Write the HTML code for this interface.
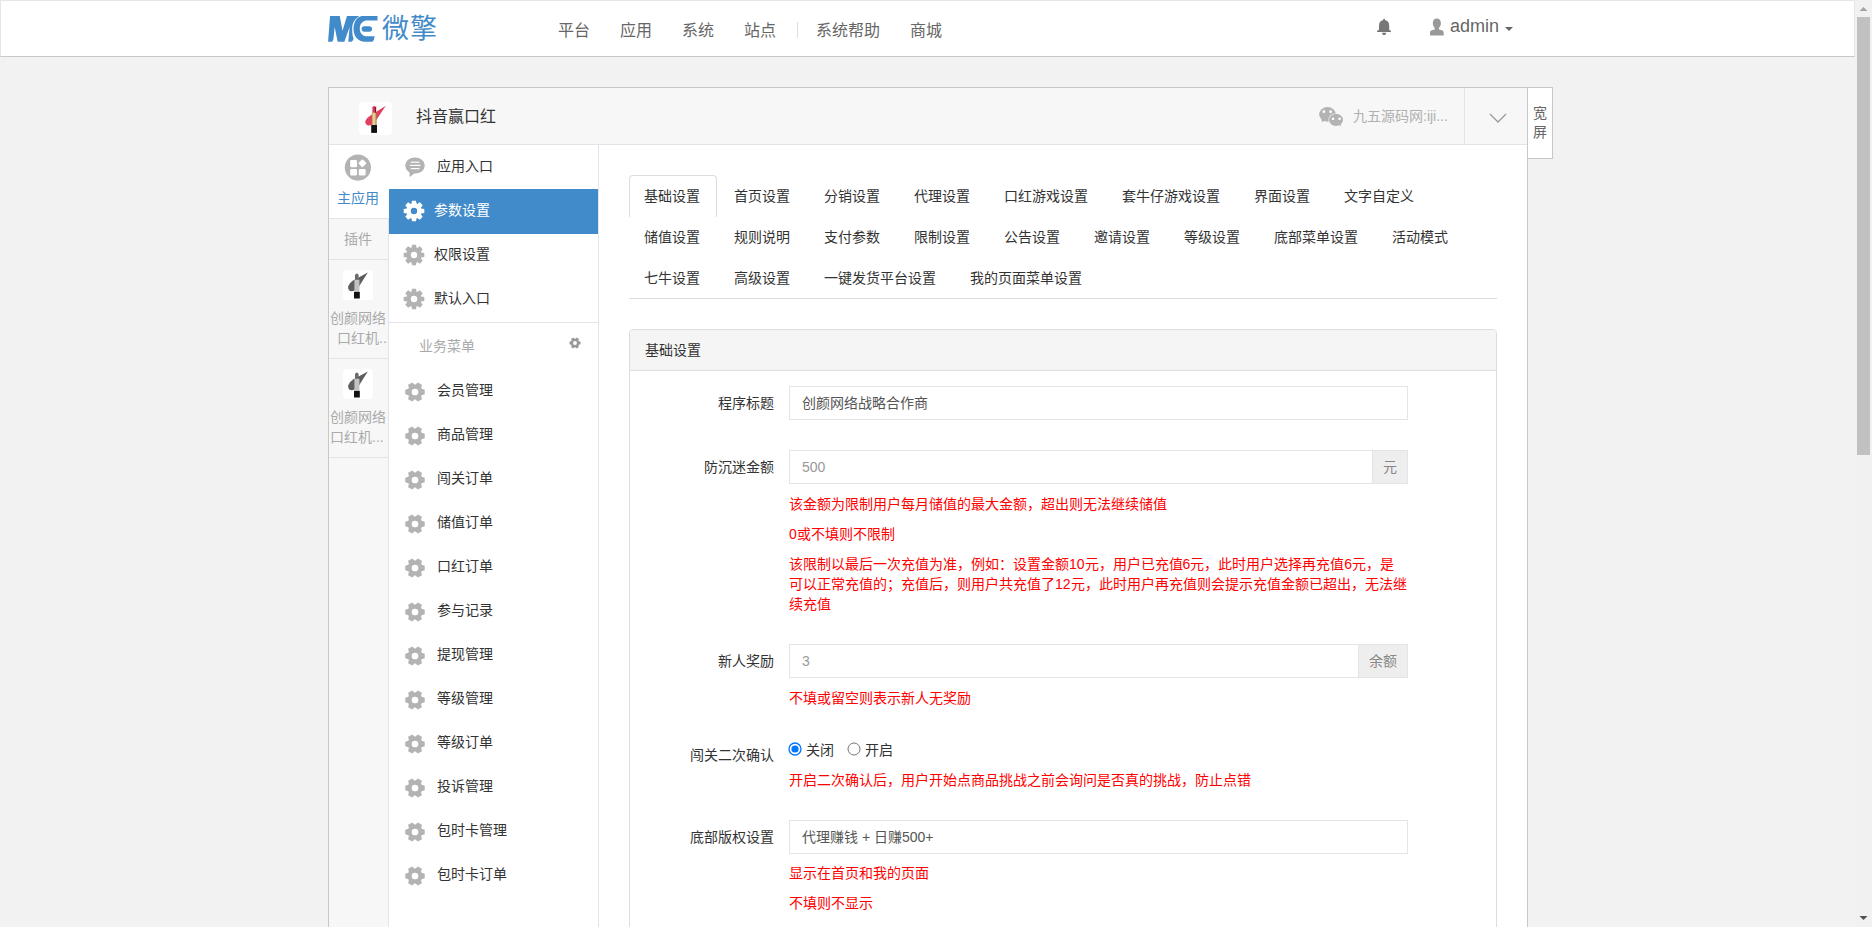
<!DOCTYPE html>
<html lang="zh-CN"><head><meta charset="utf-8"><style>
html,body{margin:0;padding:0;overflow:hidden;width:1872px;height:927px;}
body{background:#f2f2f2;font-family:"Liberation Sans",sans-serif;font-size:14px;color:#333;position:relative;}
.abs{position:absolute;}
#hdr{position:absolute;left:0;top:0;width:1853px;height:55px;background:#fff;border:1px solid #e6e6e6;border-bottom-color:#c8c8c8;}
.nav{position:absolute;top:20px;font-size:16px;color:#666;line-height:20px;white-space:nowrap;}
#sb{position:absolute;left:1855px;top:0;width:17px;height:927px;background:#f1f1f1;}
#panel{position:absolute;left:328px;top:87px;width:1198px;height:900px;border:1px solid #c8c8c8;background:#fff;}
#ph{position:absolute;left:0;top:0;width:1198px;height:56px;background:#f7f7f7;border-bottom:1px solid #e3e3e9;}
#kp{position:absolute;left:1528px;top:87px;width:24px;height:54px;padding-top:16px;border:1px solid #c8c8c8;border-left:none;background:#fff;color:#666;font-size:14px;line-height:19px;text-align:center;}
#lcol{position:absolute;left:0;top:57px;width:59px;height:900px;background:#f7f7f7;border-right:1px solid #e3e3e9;}
#mcol{position:absolute;left:60px;top:57px;width:209px;height:900px;background:#fff;border-right:1px solid #e3e3e9;}
.t{position:absolute;white-space:nowrap;line-height:20px;}
.tab{position:absolute;height:20px;line-height:20px;padding:10px 15px;white-space:nowrap;color:#333;}
.lbl{position:absolute;text-align:right;white-space:nowrap;line-height:20px;color:#333;width:200px;}
.inp{position:absolute;left:789px;width:617px;height:32px;border:1px solid #e3e3e9;background:#fff;}
.inp span{position:absolute;left:12px;top:6px;line-height:20px;color:#555;white-space:nowrap;}
.addon{position:absolute;top:-1px;height:32px;border:1px solid #e3e3e9;background:#eee;color:#888;text-align:center;line-height:32px;}
.help{position:absolute;left:789px;color:#f00;line-height:20px;white-space:nowrap;}
</style></head><body>
<div id="hdr">
  <svg class="abs" style="left:326px;top:14px" width="52" height="28" viewBox="0 0 52 28">
    <path fill="#428bca" d="M1.1,26.8 L3.05,1.1 L12.75,1.1 L15.5,15.8 L20,1.1 L32.3,1.1 C28,4 25.2,8 25.2,13.5 C25.2,18 25.6,21.5 26.6,23.8 C26,25.8 25,26.8 23.9,26.8 L21.3,26.8 L22.6,11.9 L17.4,26.8 L10.65,26.8 L7.7,11.9 L6.4,24.2 C6,26 5,26.8 3.85,26.8 Z"/>
    <path fill="#428bca" d="M34.5,1.1 L50.5,1.1 L50.5,5.5 L39.5,5.5 C35,6 32.8,9.5 32.8,13.5 C32.8,18 35.5,21.3 40,21.3 L47.7,21.3 L47,24.5 C46.5,26 45.5,26.8 44,26.8 L38,26.8 C31,26.8 26.5,21 26.5,14 C26.5,7 30,2.5 34.5,1.1 Z"/>
    <rect fill="#428bca" x="34.6" y="11.3" width="10.4" height="5.5" rx="2.75"/>
  </svg>
  <div class="abs" style="left:381px;top:12px;font-size:27px;line-height:32px;color:#428bca;letter-spacing:1px">微擎</div>
  <div class="nav" style="left:557px">平台</div>
  <div class="nav" style="left:619px">应用</div>
  <div class="nav" style="left:681px">系统</div>
  <div class="nav" style="left:743px">站点</div>
  <div class="abs" style="left:796px;top:21px;width:1px;height:16px;background:#ddd"></div>
  <div class="nav" style="left:815px">系统帮助</div>
  <div class="nav" style="left:909px">商城</div>
  <svg class="abs" style="left:1374px;top:16px" width="18" height="19" viewBox="0 0 18 19">
    <path fill="#777" d="M9.1,1.8 C9.7,1.8 10,2.4 10,3 C12.6,3.6 14.2,5.5 14.2,8.5 L14.2,12 C14.2,13 15,13.6 16,13.9 L16,15.1 L2,15.1 L2,13.9 C3,13.6 4,13 4,12 L4,8.5 C4,5.5 5.6,3.6 8.2,3 C8.2,2.4 8.5,1.8 9.1,1.8 Z M7,15.8 L11.2,15.8 C11.2,17.2 10.2,18.1 9.1,18.1 C8,18.1 7,17.2 7,15.8 Z"/>
  </svg>
  <svg class="abs" style="left:1428px;top:16px" width="16" height="19" viewBox="0 0 16 19">
    <path fill="#999" d="M7.85,1.4 C10.4,1.4 11.9,3.3 11.9,6 C11.9,8.2 11,9.9 10,10.8 L10,12.6 C13,13 14.7,13.8 14.7,15.5 L14.7,18.5 L1,18.5 L1,15.5 C1,13.8 2.7,13 5.7,12.6 L5.7,10.8 C4.7,9.9 3.8,8.2 3.8,6 C3.8,3.3 5.3,1.4 7.85,1.4 Z"/>
  </svg>
  <div class="abs" style="left:1449px;top:15px;font-size:18px;line-height:20px;color:#666">admin</div>
  <svg class="abs" style="left:1503px;top:25px" width="10" height="6" viewBox="0 0 10 6"><path fill="#666" d="M1,1 L9,1 L5,5 Z"/></svg>
</div>
<div id="sb">
  <svg class="abs" style="left:4px;top:6px" width="9" height="6" viewBox="0 0 9 6"><path fill="#a3a3a3" d="M0.5,5 L4.5,1 L8.5,5 Z"/></svg>
  <div class="abs" style="left:2px;top:17px;width:13px;height:438px;background:#c1c1c1"></div>
  <svg class="abs" style="left:4px;top:915px" width="9" height="6" viewBox="0 0 9 6"><path fill="#505050" d="M0.5,1 L8.5,1 L4.5,5 Z"/></svg>
</div>
<div id="panel"><div id="ph"></div><div id="lcol"></div><div id="mcol"></div></div>
<div id="kp">宽<br>屏</div>
<div class="abs" style="left:359px;top:102px;width:33px;height:33px;background:#fff;border-radius:4px"></div>
<svg class="abs" style="left:359px;top:102px" width="33" height="33" viewBox="0 0 33 33">
<defs><linearGradient id="gold" x1="0" x2="1" y1="0" y2="0"><stop offset="0" stop-color="#b8914a"/><stop offset="0.45" stop-color="#f3e2b0"/><stop offset="1" stop-color="#a67c3a"/></linearGradient></defs>
<path fill="#e0405e" d="M6.3,19.2 Q7.6,15.6 11.5,13.5 L26.8,3.8 L15.8,20.3 Q12.8,23.6 9.6,23.4 Q5.9,22.6 6.3,19.2 Z"/>
<path fill="#d9385a" d="M13.4,10.9 L13.4,5.2 Q14.6,3.4 16,4.2 L17.1,5 L17.1,10.9 Z"/>
<rect x="15.9" y="5" width="1.2" height="6" fill="#7a1a2c"/>
<rect x="12.8" y="10.7" width="4.8" height="12.3" fill="url(#gold)"/>
<rect x="12.2" y="23" width="5.8" height="7.9" fill="#111"/></svg>
<div class="t" style="left:416px;top:107px;color:#333;font-size:16px;">抖音赢口红</div>
<svg class="abs" style="left:1318px;top:106px" width="26" height="22" viewBox="0 0 26 22">
<ellipse cx="9.5" cy="8.35" rx="8.3" ry="7.35" fill="#b3b3b3"/><path d="M3.5,13 L4,16.2 L7,14.5 Z" fill="#b3b3b3"/>
<ellipse cx="18" cy="13.85" rx="7.6" ry="6.7" fill="#f7f7f7"/>
<ellipse cx="18" cy="13.85" rx="7" ry="6.05" fill="#b3b3b3"/><path d="M21,18.5 L22.8,20.4 L23,17.5 Z" fill="#b3b3b3"/>
<circle cx="5.9" cy="5.7" r="1.4" fill="#fff"/><circle cx="12.6" cy="5.7" r="1.4" fill="#fff"/>
<circle cx="15" cy="12.8" r="1.3" fill="#fff"/><circle cx="21.6" cy="12.8" r="1.3" fill="#fff"/></svg>
<div class="t" style="left:1353px;top:106px;color:#b0b0b0;font-size:14px;">九五源码网:iji...</div>
<div class="abs" style="left:1464px;top:88px;width:1px;height:56px;background:#e3e3e9"></div>
<svg class="abs" style="left:1488px;top:111px" width="20" height="14" viewBox="0 0 20 14"><path d="M2,3 L10,11 L18,3" fill="none" stroke="#999" stroke-width="1.3"/></svg>
<div class="abs" style="left:329px;top:145px;width:60px;height:73px;background:#fff;border-bottom:1px solid #e3e3e9"></div>
<svg class="abs" style="left:344px;top:154px" width="28" height="28" viewBox="0 0 28 28">
<circle cx="13.9" cy="13.6" r="13.1" fill="#b3b3b3"/>
<rect x="6.2" y="6" width="6.8" height="7.2" rx="1.3" fill="#fff"/>
<rect x="6.2" y="15" width="6.8" height="6.6" rx="1.3" fill="#fff"/>
<rect x="14.8" y="15" width="6.8" height="6.6" rx="1.3" fill="#fff"/>
<rect x="15.2" y="6.4" width="6" height="6" rx="1" fill="#fff" transform="rotate(45 18.4 9.6)"/></svg>
<div class="t" style="left:337px;top:188px;color:#428bca;font-size:14px;">主应用</div>
<div class="abs" style="left:329px;top:259px;width:59px;height:0;border-bottom:1px solid #e3e3e9"></div>
<div class="t" style="left:344px;top:229px;color:#aaa;font-size:14px;">插件</div>
<div class="abs" style="left:329px;top:358px;width:59px;height:0;border-bottom:1px solid #e3e3e9"></div>
<div class="abs" style="left:343px;top:270px;width:30px;height:30px;background:#fff;border-radius:3px"></div>
<svg class="abs" style="left:343px;top:270px" width="30" height="30" viewBox="0 0 30 30">
<path fill="#5e5e5e" d="M5.2,16.5 Q6.5,12.5 10.5,10.3 L24.8,2.5 L16,16.5 Q12,21.5 8,21.2 Q4.8,20.5 5.2,16.5 Z"/>
<path fill="#6a6a6a" d="M12,10 L12,5 Q13.2,2.8 14.6,3.7 L15.6,5 L15.6,10 Z"/>
<rect x="11.4" y="9.8" width="5" height="12.1" fill="#c2c2c2"/>
<rect x="11" y="21.9" width="5.8" height="6.6" fill="#111"/></svg>
<div class="t" style="left:330px;top:308px;color:#aaa;font-size:14px;">创颜网络</div>
<div class="t" style="left:337px;top:328px;color:#aaa;font-size:14px;width:51px;overflow:hidden">口红机...</div>
<div class="abs" style="left:329px;top:457px;width:59px;height:0;border-bottom:1px solid #e3e3e9"></div>
<div class="abs" style="left:343px;top:369px;width:30px;height:30px;background:#fff;border-radius:3px"></div>
<svg class="abs" style="left:343px;top:369px" width="30" height="30" viewBox="0 0 30 30">
<path fill="#5e5e5e" d="M5.2,16.5 Q6.5,12.5 10.5,10.3 L24.8,2.5 L16,16.5 Q12,21.5 8,21.2 Q4.8,20.5 5.2,16.5 Z"/>
<path fill="#6a6a6a" d="M12,10 L12,5 Q13.2,2.8 14.6,3.7 L15.6,5 L15.6,10 Z"/>
<rect x="11.4" y="9.8" width="5" height="12.1" fill="#c2c2c2"/>
<rect x="11" y="21.9" width="5.8" height="6.6" fill="#111"/></svg>
<div class="t" style="left:330px;top:407px;color:#aaa;font-size:14px;">创颜网络</div>
<div class="t" style="left:330px;top:427px;color:#aaa;font-size:14px;width:58px;overflow:hidden">口红机...</div>
<svg class="abs" style="left:404px;top:156px" width="22" height="22" viewBox="0 0 22 22">
<ellipse cx="11" cy="9.5" rx="9.8" ry="8" fill="#b3b3b3"/><path d="M5.2,14.5 L5.8,21 L10.8,17 Z" fill="#b3b3b3"/>
<rect x="6.8" y="5.6" width="8.6" height="1.2" fill="#fff"/><rect x="5.8" y="8.8" width="10.6" height="1.2" fill="#fff"/><rect x="6.8" y="12" width="8.6" height="1.2" fill="#fff"/></svg>
<div class="t" style="left:437px;top:156px;color:#333;font-size:14px;">应用入口</div>
<div class="abs" style="left:389px;top:189px;width:209px;height:45px;background:#428bca"></div>
<svg class="abs" style="left:401.6px;top:199.4px" width="24" height="24" viewBox="0 0 24 24"><path fill="#fff" fill-rule="evenodd" d="M9.40,4.86 L10.00,1.69 L14.00,1.69 L14.60,4.86 L15.21,5.11 L17.87,3.30 L20.70,6.13 L18.89,8.79 L19.14,9.40 L22.31,10.00 L22.31,14.00 L19.14,14.60 L18.89,15.21 L20.70,17.87 L17.87,20.70 L15.21,18.89 L14.60,19.14 L14.00,22.31 L10.00,22.31 L9.40,19.14 L8.79,18.89 L6.13,20.70 L3.30,17.87 L5.11,15.21 L4.86,14.60 L1.69,14.00 L1.69,10.00 L4.86,9.40 L5.11,8.79 L3.30,6.13 L6.13,3.30 L8.79,5.11 Z M15.20,12.00 A3.2,3.2 0 1 0 8.80,12.00 A3.2,3.2 0 1 0 15.20,12.00 Z"/></svg>
<div class="t" style="left:434px;top:200px;color:#fff;font-size:14px;">参数设置</div>
<svg class="abs" style="left:401.6px;top:243.4px" width="24" height="24" viewBox="0 0 24 24"><path fill="#b3b3b3" fill-rule="evenodd" d="M9.40,4.86 L10.00,1.69 L14.00,1.69 L14.60,4.86 L15.21,5.11 L17.87,3.30 L20.70,6.13 L18.89,8.79 L19.14,9.40 L22.31,10.00 L22.31,14.00 L19.14,14.60 L18.89,15.21 L20.70,17.87 L17.87,20.70 L15.21,18.89 L14.60,19.14 L14.00,22.31 L10.00,22.31 L9.40,19.14 L8.79,18.89 L6.13,20.70 L3.30,17.87 L5.11,15.21 L4.86,14.60 L1.69,14.00 L1.69,10.00 L4.86,9.40 L5.11,8.79 L3.30,6.13 L6.13,3.30 L8.79,5.11 Z M15.20,12.00 A3.2,3.2 0 1 0 8.80,12.00 A3.2,3.2 0 1 0 15.20,12.00 Z"/></svg>
<div class="t" style="left:434px;top:244px;color:#333;font-size:14px;">权限设置</div>
<svg class="abs" style="left:401.6px;top:287.4px" width="24" height="24" viewBox="0 0 24 24"><path fill="#b3b3b3" fill-rule="evenodd" d="M9.40,4.86 L10.00,1.69 L14.00,1.69 L14.60,4.86 L15.21,5.11 L17.87,3.30 L20.70,6.13 L18.89,8.79 L19.14,9.40 L22.31,10.00 L22.31,14.00 L19.14,14.60 L18.89,15.21 L20.70,17.87 L17.87,20.70 L15.21,18.89 L14.60,19.14 L14.00,22.31 L10.00,22.31 L9.40,19.14 L8.79,18.89 L6.13,20.70 L3.30,17.87 L5.11,15.21 L4.86,14.60 L1.69,14.00 L1.69,10.00 L4.86,9.40 L5.11,8.79 L3.30,6.13 L6.13,3.30 L8.79,5.11 Z M15.20,12.00 A3.2,3.2 0 1 0 8.80,12.00 A3.2,3.2 0 1 0 15.20,12.00 Z"/></svg>
<div class="t" style="left:434px;top:288px;color:#333;font-size:14px;">默认入口</div>
<div class="abs" style="left:389px;top:322px;width:209px;height:1px;background:#e3e3e9"></div>
<div class="t" style="left:419px;top:336px;color:#aaa;font-size:14px;">业务菜单</div>
<svg class="abs" style="left:563.2px;top:330.9px" width="24" height="24" viewBox="0 0 24 24"><path fill="#999" fill-rule="evenodd" d="M15.81,10.14 L17.53,10.67 L17.53,13.33 L15.81,13.86 L15.51,14.37 L15.92,16.12 L13.61,17.45 L12.30,16.22 L11.70,16.22 L10.39,17.45 L8.08,16.12 L8.49,14.37 L8.19,13.86 L6.47,13.33 L6.47,10.67 L8.19,10.14 L8.49,9.63 L8.08,7.88 L10.39,6.55 L11.70,7.78 L12.30,7.78 L13.61,6.55 L15.92,7.88 L15.51,9.63 Z M13.91,12.00 A1.9139999999999997,1.9139999999999997 0 1 0 10.09,12.00 A1.9139999999999997,1.9139999999999997 0 1 0 13.91,12.00 Z"/></svg>
<svg class="abs" style="left:403.2px;top:379.5px" width="24" height="24" viewBox="0 0 24 24"><path fill="#b3b3b3" fill-rule="evenodd" d="M18.69,8.74 L21.72,9.65 L21.72,14.35 L18.69,15.26 L18.17,16.16 L18.89,19.24 L14.83,21.59 L12.52,19.43 L11.48,19.43 L9.17,21.59 L5.11,19.24 L5.83,16.16 L5.31,15.26 L2.28,14.35 L2.28,9.65 L5.31,8.74 L5.83,7.84 L5.11,4.76 L9.17,2.41 L11.48,4.57 L12.52,4.57 L14.83,2.41 L18.89,4.76 L18.17,7.84 Z M15.37,12.00 A3.3659999999999997,3.3659999999999997 0 1 0 8.63,12.00 A3.3659999999999997,3.3659999999999997 0 1 0 15.37,12.00 Z"/></svg>
<div class="t" style="left:437px;top:380px;color:#333;font-size:14px;">会员管理</div>
<svg class="abs" style="left:403.2px;top:423.5px" width="24" height="24" viewBox="0 0 24 24"><path fill="#b3b3b3" fill-rule="evenodd" d="M18.69,8.74 L21.72,9.65 L21.72,14.35 L18.69,15.26 L18.17,16.16 L18.89,19.24 L14.83,21.59 L12.52,19.43 L11.48,19.43 L9.17,21.59 L5.11,19.24 L5.83,16.16 L5.31,15.26 L2.28,14.35 L2.28,9.65 L5.31,8.74 L5.83,7.84 L5.11,4.76 L9.17,2.41 L11.48,4.57 L12.52,4.57 L14.83,2.41 L18.89,4.76 L18.17,7.84 Z M15.37,12.00 A3.3659999999999997,3.3659999999999997 0 1 0 8.63,12.00 A3.3659999999999997,3.3659999999999997 0 1 0 15.37,12.00 Z"/></svg>
<div class="t" style="left:437px;top:424px;color:#333;font-size:14px;">商品管理</div>
<svg class="abs" style="left:403.2px;top:467.5px" width="24" height="24" viewBox="0 0 24 24"><path fill="#b3b3b3" fill-rule="evenodd" d="M18.69,8.74 L21.72,9.65 L21.72,14.35 L18.69,15.26 L18.17,16.16 L18.89,19.24 L14.83,21.59 L12.52,19.43 L11.48,19.43 L9.17,21.59 L5.11,19.24 L5.83,16.16 L5.31,15.26 L2.28,14.35 L2.28,9.65 L5.31,8.74 L5.83,7.84 L5.11,4.76 L9.17,2.41 L11.48,4.57 L12.52,4.57 L14.83,2.41 L18.89,4.76 L18.17,7.84 Z M15.37,12.00 A3.3659999999999997,3.3659999999999997 0 1 0 8.63,12.00 A3.3659999999999997,3.3659999999999997 0 1 0 15.37,12.00 Z"/></svg>
<div class="t" style="left:437px;top:468px;color:#333;font-size:14px;">闯关订单</div>
<svg class="abs" style="left:403.2px;top:511.5px" width="24" height="24" viewBox="0 0 24 24"><path fill="#b3b3b3" fill-rule="evenodd" d="M18.69,8.74 L21.72,9.65 L21.72,14.35 L18.69,15.26 L18.17,16.16 L18.89,19.24 L14.83,21.59 L12.52,19.43 L11.48,19.43 L9.17,21.59 L5.11,19.24 L5.83,16.16 L5.31,15.26 L2.28,14.35 L2.28,9.65 L5.31,8.74 L5.83,7.84 L5.11,4.76 L9.17,2.41 L11.48,4.57 L12.52,4.57 L14.83,2.41 L18.89,4.76 L18.17,7.84 Z M15.37,12.00 A3.3659999999999997,3.3659999999999997 0 1 0 8.63,12.00 A3.3659999999999997,3.3659999999999997 0 1 0 15.37,12.00 Z"/></svg>
<div class="t" style="left:437px;top:512px;color:#333;font-size:14px;">储值订单</div>
<svg class="abs" style="left:403.2px;top:555.5px" width="24" height="24" viewBox="0 0 24 24"><path fill="#b3b3b3" fill-rule="evenodd" d="M18.69,8.74 L21.72,9.65 L21.72,14.35 L18.69,15.26 L18.17,16.16 L18.89,19.24 L14.83,21.59 L12.52,19.43 L11.48,19.43 L9.17,21.59 L5.11,19.24 L5.83,16.16 L5.31,15.26 L2.28,14.35 L2.28,9.65 L5.31,8.74 L5.83,7.84 L5.11,4.76 L9.17,2.41 L11.48,4.57 L12.52,4.57 L14.83,2.41 L18.89,4.76 L18.17,7.84 Z M15.37,12.00 A3.3659999999999997,3.3659999999999997 0 1 0 8.63,12.00 A3.3659999999999997,3.3659999999999997 0 1 0 15.37,12.00 Z"/></svg>
<div class="t" style="left:437px;top:556px;color:#333;font-size:14px;">口红订单</div>
<svg class="abs" style="left:403.2px;top:599.5px" width="24" height="24" viewBox="0 0 24 24"><path fill="#b3b3b3" fill-rule="evenodd" d="M18.69,8.74 L21.72,9.65 L21.72,14.35 L18.69,15.26 L18.17,16.16 L18.89,19.24 L14.83,21.59 L12.52,19.43 L11.48,19.43 L9.17,21.59 L5.11,19.24 L5.83,16.16 L5.31,15.26 L2.28,14.35 L2.28,9.65 L5.31,8.74 L5.83,7.84 L5.11,4.76 L9.17,2.41 L11.48,4.57 L12.52,4.57 L14.83,2.41 L18.89,4.76 L18.17,7.84 Z M15.37,12.00 A3.3659999999999997,3.3659999999999997 0 1 0 8.63,12.00 A3.3659999999999997,3.3659999999999997 0 1 0 15.37,12.00 Z"/></svg>
<div class="t" style="left:437px;top:600px;color:#333;font-size:14px;">参与记录</div>
<svg class="abs" style="left:403.2px;top:643.5px" width="24" height="24" viewBox="0 0 24 24"><path fill="#b3b3b3" fill-rule="evenodd" d="M18.69,8.74 L21.72,9.65 L21.72,14.35 L18.69,15.26 L18.17,16.16 L18.89,19.24 L14.83,21.59 L12.52,19.43 L11.48,19.43 L9.17,21.59 L5.11,19.24 L5.83,16.16 L5.31,15.26 L2.28,14.35 L2.28,9.65 L5.31,8.74 L5.83,7.84 L5.11,4.76 L9.17,2.41 L11.48,4.57 L12.52,4.57 L14.83,2.41 L18.89,4.76 L18.17,7.84 Z M15.37,12.00 A3.3659999999999997,3.3659999999999997 0 1 0 8.63,12.00 A3.3659999999999997,3.3659999999999997 0 1 0 15.37,12.00 Z"/></svg>
<div class="t" style="left:437px;top:644px;color:#333;font-size:14px;">提现管理</div>
<svg class="abs" style="left:403.2px;top:687.5px" width="24" height="24" viewBox="0 0 24 24"><path fill="#b3b3b3" fill-rule="evenodd" d="M18.69,8.74 L21.72,9.65 L21.72,14.35 L18.69,15.26 L18.17,16.16 L18.89,19.24 L14.83,21.59 L12.52,19.43 L11.48,19.43 L9.17,21.59 L5.11,19.24 L5.83,16.16 L5.31,15.26 L2.28,14.35 L2.28,9.65 L5.31,8.74 L5.83,7.84 L5.11,4.76 L9.17,2.41 L11.48,4.57 L12.52,4.57 L14.83,2.41 L18.89,4.76 L18.17,7.84 Z M15.37,12.00 A3.3659999999999997,3.3659999999999997 0 1 0 8.63,12.00 A3.3659999999999997,3.3659999999999997 0 1 0 15.37,12.00 Z"/></svg>
<div class="t" style="left:437px;top:688px;color:#333;font-size:14px;">等级管理</div>
<svg class="abs" style="left:403.2px;top:731.5px" width="24" height="24" viewBox="0 0 24 24"><path fill="#b3b3b3" fill-rule="evenodd" d="M18.69,8.74 L21.72,9.65 L21.72,14.35 L18.69,15.26 L18.17,16.16 L18.89,19.24 L14.83,21.59 L12.52,19.43 L11.48,19.43 L9.17,21.59 L5.11,19.24 L5.83,16.16 L5.31,15.26 L2.28,14.35 L2.28,9.65 L5.31,8.74 L5.83,7.84 L5.11,4.76 L9.17,2.41 L11.48,4.57 L12.52,4.57 L14.83,2.41 L18.89,4.76 L18.17,7.84 Z M15.37,12.00 A3.3659999999999997,3.3659999999999997 0 1 0 8.63,12.00 A3.3659999999999997,3.3659999999999997 0 1 0 15.37,12.00 Z"/></svg>
<div class="t" style="left:437px;top:732px;color:#333;font-size:14px;">等级订单</div>
<svg class="abs" style="left:403.2px;top:775.5px" width="24" height="24" viewBox="0 0 24 24"><path fill="#b3b3b3" fill-rule="evenodd" d="M18.69,8.74 L21.72,9.65 L21.72,14.35 L18.69,15.26 L18.17,16.16 L18.89,19.24 L14.83,21.59 L12.52,19.43 L11.48,19.43 L9.17,21.59 L5.11,19.24 L5.83,16.16 L5.31,15.26 L2.28,14.35 L2.28,9.65 L5.31,8.74 L5.83,7.84 L5.11,4.76 L9.17,2.41 L11.48,4.57 L12.52,4.57 L14.83,2.41 L18.89,4.76 L18.17,7.84 Z M15.37,12.00 A3.3659999999999997,3.3659999999999997 0 1 0 8.63,12.00 A3.3659999999999997,3.3659999999999997 0 1 0 15.37,12.00 Z"/></svg>
<div class="t" style="left:437px;top:776px;color:#333;font-size:14px;">投诉管理</div>
<svg class="abs" style="left:403.2px;top:819.5px" width="24" height="24" viewBox="0 0 24 24"><path fill="#b3b3b3" fill-rule="evenodd" d="M18.69,8.74 L21.72,9.65 L21.72,14.35 L18.69,15.26 L18.17,16.16 L18.89,19.24 L14.83,21.59 L12.52,19.43 L11.48,19.43 L9.17,21.59 L5.11,19.24 L5.83,16.16 L5.31,15.26 L2.28,14.35 L2.28,9.65 L5.31,8.74 L5.83,7.84 L5.11,4.76 L9.17,2.41 L11.48,4.57 L12.52,4.57 L14.83,2.41 L18.89,4.76 L18.17,7.84 Z M15.37,12.00 A3.3659999999999997,3.3659999999999997 0 1 0 8.63,12.00 A3.3659999999999997,3.3659999999999997 0 1 0 15.37,12.00 Z"/></svg>
<div class="t" style="left:437px;top:820px;color:#333;font-size:14px;">包时卡管理</div>
<svg class="abs" style="left:403.2px;top:863.5px" width="24" height="24" viewBox="0 0 24 24"><path fill="#b3b3b3" fill-rule="evenodd" d="M18.69,8.74 L21.72,9.65 L21.72,14.35 L18.69,15.26 L18.17,16.16 L18.89,19.24 L14.83,21.59 L12.52,19.43 L11.48,19.43 L9.17,21.59 L5.11,19.24 L5.83,16.16 L5.31,15.26 L2.28,14.35 L2.28,9.65 L5.31,8.74 L5.83,7.84 L5.11,4.76 L9.17,2.41 L11.48,4.57 L12.52,4.57 L14.83,2.41 L18.89,4.76 L18.17,7.84 Z M15.37,12.00 A3.3659999999999997,3.3659999999999997 0 1 0 8.63,12.00 A3.3659999999999997,3.3659999999999997 0 1 0 15.37,12.00 Z"/></svg>
<div class="t" style="left:437px;top:864px;color:#333;font-size:14px;">包时卡订单</div>
<div class="abs" style="left:629px;top:298px;width:868px;height:1px;background:#ddd"></div>
<div class="abs" style="left:629px;top:175px;width:86px;height:41px;border:1px solid #ddd;border-bottom:none;border-radius:4px 4px 0 0;background:#fff"></div>
<div class="t" style="left:644px;top:186px;color:#333;font-size:14px;">基础设置</div>
<div class="t" style="left:734px;top:186px;color:#333;font-size:14px;">首页设置</div>
<div class="t" style="left:824px;top:186px;color:#333;font-size:14px;">分销设置</div>
<div class="t" style="left:914px;top:186px;color:#333;font-size:14px;">代理设置</div>
<div class="t" style="left:1004px;top:186px;color:#333;font-size:14px;">口红游戏设置</div>
<div class="t" style="left:1122px;top:186px;color:#333;font-size:14px;">套牛仔游戏设置</div>
<div class="t" style="left:1254px;top:186px;color:#333;font-size:14px;">界面设置</div>
<div class="t" style="left:1344px;top:186px;color:#333;font-size:14px;">文字自定义</div>
<div class="t" style="left:644px;top:227px;color:#333;font-size:14px;">储值设置</div>
<div class="t" style="left:734px;top:227px;color:#333;font-size:14px;">规则说明</div>
<div class="t" style="left:824px;top:227px;color:#333;font-size:14px;">支付参数</div>
<div class="t" style="left:914px;top:227px;color:#333;font-size:14px;">限制设置</div>
<div class="t" style="left:1004px;top:227px;color:#333;font-size:14px;">公告设置</div>
<div class="t" style="left:1094px;top:227px;color:#333;font-size:14px;">邀请设置</div>
<div class="t" style="left:1184px;top:227px;color:#333;font-size:14px;">等级设置</div>
<div class="t" style="left:1274px;top:227px;color:#333;font-size:14px;">底部菜单设置</div>
<div class="t" style="left:1392px;top:227px;color:#333;font-size:14px;">活动模式</div>
<div class="t" style="left:644px;top:268px;color:#333;font-size:14px;">七牛设置</div>
<div class="t" style="left:734px;top:268px;color:#333;font-size:14px;">高级设置</div>
<div class="t" style="left:824px;top:268px;color:#333;font-size:14px;">一键发货平台设置</div>
<div class="t" style="left:970px;top:268px;color:#333;font-size:14px;">我的页面菜单设置</div>
<div class="abs" style="left:629px;top:329px;width:866px;height:700px;border:1px solid #ddd;border-radius:4px;background:#fff"></div>
<div class="abs" style="left:630px;top:330px;width:866px;height:40px;background:#f5f5f5;border-bottom:1px solid #ddd;border-radius:3px 3px 0 0"></div>
<div class="t" style="left:645px;top:340px;color:#333;font-size:14px;">基础设置</div>
<div class="lbl" style="left:574px;top:393px">程序标题</div>
<div class="inp" style="top:386px"><span style="color:#555">创颜网络战略合作商</span></div>
<div class="lbl" style="left:574px;top:457px">防沉迷金额</div>
<div class="inp" style="top:450px"><span style="color:#999">500</span><div class="addon" style="left:582px;width:34px">元</div></div>
<div class="help" style="top:494px">该金额为限制用户每月储值的最大金额，超出则无法继续储值</div>
<div class="help" style="top:524px">0或不填则不限制</div>
<div class="help" style="top:554px;">该限制以最后一次充值为准，例如：设置金额10元，用户已充值6元，此时用户选择再充值6元，是<br>可以正常充值的；充值后，则用户共充值了12元，此时用户再充值则会提示充值金额已超出，无法继<br>续充值</div>
<div class="lbl" style="left:574px;top:651px">新人奖励</div>
<div class="inp" style="top:644px"><span style="color:#999">3</span><div class="addon" style="left:568px;width:48px">余额</div></div>
<div class="help" style="top:688px">不填或留空则表示新人无奖励</div>
<div class="lbl" style="left:574px;top:745px">闯关二次确认</div>
<svg class="abs" style="left:788px;top:742px" width="14" height="14" viewBox="0 0 14 14"><circle cx="7" cy="7" r="6" fill="#fff" stroke="#0075ff" stroke-width="1.3"/><circle cx="7" cy="7" r="3.6" fill="#0075ff"/></svg>
<div class="t" style="left:806px;top:740px;color:#333;font-size:14px;">关闭</div>
<svg class="abs" style="left:847px;top:742px" width="14" height="14" viewBox="0 0 14 14"><circle cx="7" cy="7" r="6" fill="#fff" stroke="#767676" stroke-width="1"/></svg>
<div class="t" style="left:865px;top:740px;color:#333;font-size:14px;">开启</div>
<div class="help" style="top:770px">开启二次确认后，用户开始点商品挑战之前会询问是否真的挑战，防止点错</div>
<div class="lbl" style="left:574px;top:827px">底部版权设置</div>
<div class="inp" style="top:820px"><span style="color:#555">代理赚钱 + 日赚500+</span></div>
<div class="help" style="top:863px">显示在首页和我的页面</div>
<div class="help" style="top:893px">不填则不显示</div>
</body></html>
